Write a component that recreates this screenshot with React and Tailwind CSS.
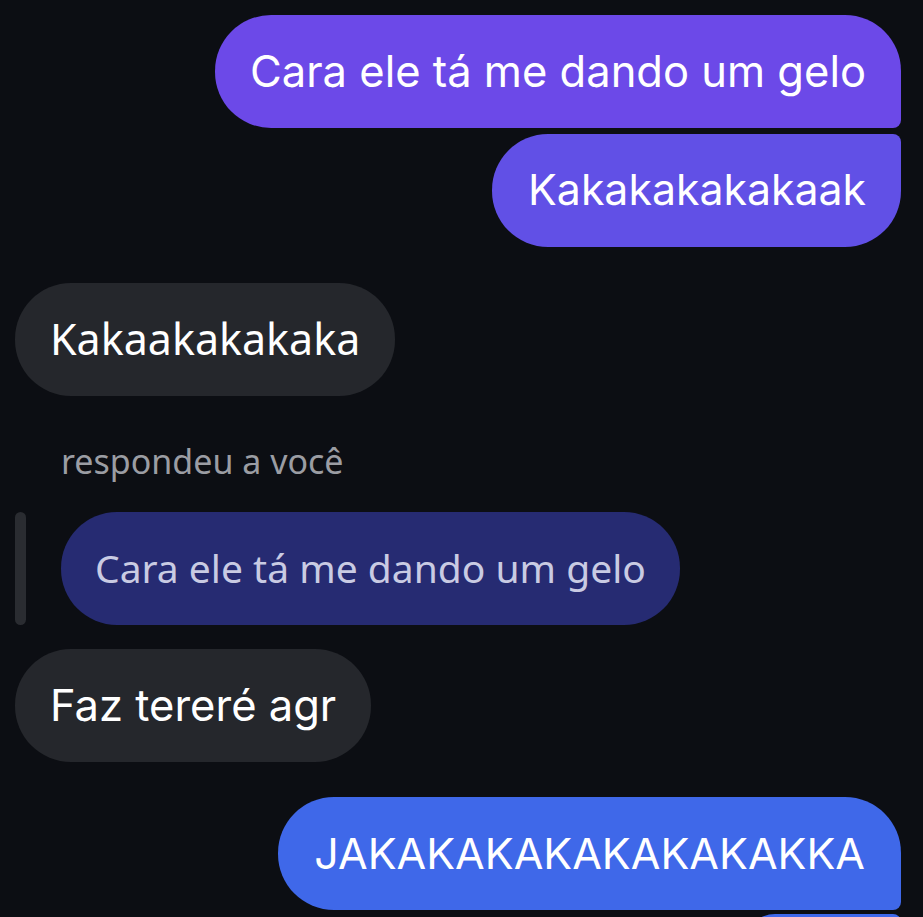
export default function App() {
  const sent = "font-['Inter',sans-serif] text-white";
  const noto = "font-['Noto_Sans',sans-serif]";
  return (
    <div className="h-[917px] w-[923px] overflow-hidden bg-[#0c0e13] pl-[15px] pr-[22px] pt-[15px]">
      <div className="flex flex-col">
        <div className="flex justify-end">
          <div className={`flex h-[113px] items-center rounded-[56px] rounded-br-[8px] bg-[#6c49e8] px-[35px] text-[43.5px] ${sent}`}>
            Cara ele tá me dando um gelo
          </div>
        </div>
        <div className="mt-[6px] flex justify-end">
          <div className={`flex h-[113px] items-center rounded-[56px] rounded-tr-[8px] bg-[#6150e6] pl-[36px] pr-[35px] text-[42.8px] ${sent}`}>
            Kakakakakakaak
          </div>
        </div>
        <div className="mt-[36px] flex justify-start">
          <div className={`flex h-[113px] items-center rounded-[56px] bg-[#25272c] px-[35px] ${noto} text-[43px] text-white`}>
            Kakaakakakaka
          </div>
        </div>
        <div className={`mt-[50px] pl-[46px] ${noto} text-[34px] leading-[30px] text-[#9b9da3]`}>
          respondeu a você
        </div>
        <div className="mt-[36px] flex items-stretch gap-[35px]">
          <div className="w-[11px] rounded-full bg-[#2a2c31]" />
          <div className={`flex h-[113px] items-center rounded-[56px] bg-[#262b72] px-[34px] ${noto} text-[39px] text-[#c9cbe3]`}>
            Cara ele tá me dando um gelo
          </div>
        </div>
        <div className="mt-[24px] flex justify-start">
          <div className={`flex h-[113px] items-center rounded-[56px] bg-[#25272c] px-[35px] text-[43.5px] ${sent}`}>
            Faz tereré agr
          </div>
        </div>
        <div className="mt-[35px] flex justify-end">
          <div className={`flex h-[113px] items-center rounded-[56px] rounded-br-[8px] bg-[#3f68e9] px-[36px] text-[43px] ${sent}`}>
            JAKAKAKAKAKAKAKAKKA
          </div>
        </div>
        <div className="mt-[4px] flex justify-end">
          <div className="h-[60px] w-[156px] rounded-[30px] rounded-tr-[8px] bg-[#3f68e9]" />
        </div>
      </div>
    </div>
  );
}
